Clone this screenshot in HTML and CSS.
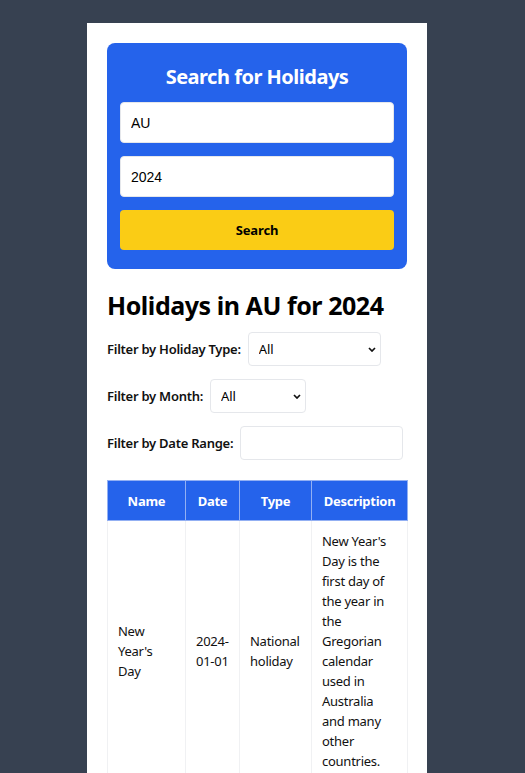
FILE: index.html
```html
<!DOCTYPE html>
<html lang="en">
<head>
<meta charset="utf-8">
<title>Holidays</title>
<link rel="stylesheet" href="styles.css">
</head>
<body>
<main class="page">
  <section class="search-card">
    <h2 class="search-title">Search for Holidays</h2>
    <input class="search-input" type="text" value="AU">
    <input class="search-input" type="text" value="2024">
    <button class="search-btn" type="button">Search</button>
  </section>

  <h1 class="results-title">Holidays in AU for 2024</h1>

  <div class="filter-row">
    <label class="filter-label">Filter by Holiday Type:</label>
    <div class="select-wrap type-select">
      <select class="filter-select"><option>All</option></select>
      <svg class="chevron" width="8" height="5" viewBox="0 0 8 5"><path d="M1 1l3 3 3-3" fill="none" stroke="#111" stroke-width="1.7"/></svg>
    </div>
  </div>
  <div class="filter-row">
    <label class="filter-label">Filter by Month:</label>
    <div class="select-wrap month-select">
      <select class="filter-select"><option>All</option></select>
      <svg class="chevron" width="8" height="5" viewBox="0 0 8 5"><path d="M1 1l3 3 3-3" fill="none" stroke="#111" stroke-width="1.7"/></svg>
    </div>
  </div>
  <div class="filter-row">
    <label class="filter-label">Filter by Date Range:</label>
    <input class="range-input" type="text">
  </div>

  <table class="holiday-table">
    <colgroup>
      <col class="c-name"><col class="c-date"><col class="c-type"><col class="c-desc">
    </colgroup>
    <thead>
      <tr><th>Name</th><th>Date</th><th>Type</th><th>Description</th></tr>
    </thead>
    <tbody>
      <tr>
        <td>New Year's Day</td>
        <td>2024-01-01</td>
        <td>National holiday</td>
        <td>New Year's Day is the first day of the year in the Gregorian calendar used in Australia and many other countries.</td>
      </tr>
    </tbody>
  </table>
</main>
</body>
</html>
```

FILE: styles.css
```css
* { box-sizing: border-box; }

html, body {
  margin: 0;
  background: #374151;
}

body {
  font-family: "Noto Sans", "Open Sans", sans-serif;
  color: #111827;
  letter-spacing: -0.016em;
}

.page {
  width: 340px;
  margin: 23px 0 0 87px;
  background: #ffffff;
  padding: 20px 20px 40px;
  min-height: 800px;
}

.search-card {
  background: #2563eb;
  border-radius: 8px;
  padding: 20px 13px 19px;
  display: flex;
  flex-direction: column;
}

.search-title {
  margin: 0 0 11px;
  color: #ffffff;
  font-size: 20px;
  line-height: 28px;
  font-weight: 700;
  text-align: center;
  letter-spacing: -0.025em;
}

.search-input {
  height: 41px;
  margin: 0 0 13px;
  border: 1px solid #e5e7eb;
  border-radius: 4px;
  padding: 0 10px;
  font-family: "Liberation Sans", Arial, sans-serif;
  font-size: 14px;
  letter-spacing: 0;
  color: #000;
  background: #fff;
}

.search-btn {
  height: 40px;
  border: none;
  border-radius: 4px;
  background: #facc15;
  color: #000;
  font-family: "Noto Sans", sans-serif;
  font-weight: 700;
  font-size: 13px;
  letter-spacing: -0.01em;
}

.results-title {
  margin: 20px 0 11px;
  font-size: 25px;
  line-height: 32px;
  font-weight: 700;
  color: #000;
  letter-spacing: -0.018em;
}

.filter-row {
  display: flex;
  align-items: center;
  gap: 7px;
  margin-bottom: 13px;
}

.filter-label {
  font-size: 13px;
  font-weight: 600;
  color: #111;
}

.select-wrap {
  position: relative;
  height: 34px;
}

.type-select { width: 133px; }
.month-select { width: 96px; }

.filter-select {
  appearance: none;
  -webkit-appearance: none;
  width: 100%;
  height: 34px;
  border: 1px solid #e5e7eb;
  border-radius: 4px;
  background: #fff;
  padding: 0 10px;
  font-family: "Noto Sans", sans-serif;
  font-size: 13px;
  letter-spacing: -0.01em;
  color: #000;
}

.chevron {
  position: absolute;
  right: 5px;
  top: 15px;
  pointer-events: none;
}

.range-input {
  width: 163px;
  height: 34px;
  border: 1px solid #e5e7eb;
  border-radius: 4px;
  background: #fff;
}

.holiday-table {
  width: 300px;
  margin-top: 20px;
  border-collapse: collapse;
  table-layout: fixed;
  font-size: 13px;
  line-height: 20px;
}

.c-name { width: 78px; }
.c-date { width: 54px; }
.c-type { width: 72px; }
.c-desc { width: 96px; }

.holiday-table th {
  background: #2563eb;
  color: #fff;
  font-weight: 700;
  padding: 10px 2px 9px;
  border: 1px solid #93b0f3;
  text-align: center;
}

.holiday-table td {
  padding: 10px 10px;
  border: 1px solid #f0f1f3;
  vertical-align: middle;
  color: #111;
}
```
